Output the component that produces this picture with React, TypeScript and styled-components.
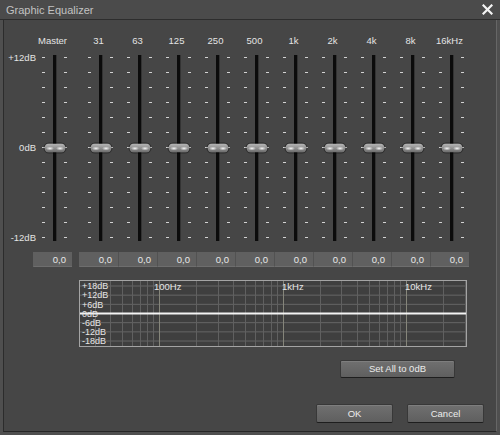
import styled, { createGlobalStyle } from 'styled-components';

const GlobalStyle = createGlobalStyle`
  html,
  body {
    margin: 0;
    width: 500px;
    height: 435px;
    overflow: hidden;
    background: #4f4f4f;
    font-family: 'Liberation Sans', Arial, sans-serif;
  }
`;

const bands = ['31', '63', '125', '250', '500', '1k', '2k', '4k', '8k', '16kHz'];
const tickRows = Array.from({ length: 13 }, (_, i) => i);
const scaleLabels: Record<number, string> = { 0: '+12dB', 6: '0dB', 12: '-12dB' };

const Window = styled.div`
  display: flex;
  flex-direction: column;
  height: 435px;
`;

const TitleBar = styled.div`
  height: 19px;
  display: flex;
  align-items: center;
  justify-content: space-between;
  padding: 0 7px 0 6px;
  background: #4b4b4b;
  border-bottom: 1px solid #2d2d2d;
`;

const TitleText = styled.span`
  font-size: 11px;
  color: #c2c2c2;
`;

const Body = styled.div`
  height: 412px;
  margin: 0 3px;
  padding-top: 15px;
  box-sizing: border-box;
  display: flex;
  flex-direction: column;
  background: #464646;
  border-left: 1px solid #2c2c2c;
  border-right: 1px solid #666;
  border-bottom: 1px solid #262626;
`;

const BandGrid = styled.div<{ $top?: number }>`
  display: grid;
  grid-template-columns: 29px 39px 7px repeat(10, 39px);
  margin-top: ${(p) => p.$top ?? 0}px;
`;

const HeaderLabel = styled.span`
  height: 12px;
  line-height: 12px;
  font-size: 9.5px;
  color: #e4e4e4;
  text-align: center;
`;

const ScaleColumn = styled.div`
  display: flex;
  flex-direction: column;
  margin-right: -3px;
`;

const ScaleRow = styled.div`
  height: 15px;
  display: flex;
  align-items: center;
  justify-content: flex-end;
  font-size: 9.5px;
  color: #e4e4e4;
`;

const SliderCell = styled.div`
  height: 195px;
  display: flex;
  justify-content: center;
  gap: 8px;
  padding-left: 4px;
`;

const TickColumn = styled.div`
  width: 3px;
  display: flex;
  flex-direction: column;
`;

const TickRow = styled.div`
  height: 15px;
  display: flex;
  align-items: center;
`;

const Tick = styled.span`
  width: 3px;
  height: 1px;
  background: #d2d2d2;
`;

const Track = styled.div`
  position: relative;
  width: 3px;
  margin: 4.5px 0;
  background: #0b0b0b;
  box-shadow: 1px 0 0 #333;
`;

const Knob = styled.div`
  position: absolute;
  left: 50%;
  top: 50%;
  width: 21px;
  height: 9px;
  transform: translate(-50%, -50%);
  border-radius: 4.5px;
  background: radial-gradient(ellipse 4px 2px at 26% 55%, #f4f4f4, transparent),
    radial-gradient(ellipse 4px 2px at 74% 55%, #f4f4f4, transparent),
    linear-gradient(#b8b8b8, #8e8e8e 55%, #6a6a6a);
  box-shadow: 0 0 0 1px rgba(0, 0, 0, 0.35);
`;

const ValueBox = styled.div<{ $first?: boolean }>`
  height: 15px;
  line-height: 15px;
  box-sizing: border-box;
  padding-right: 6px;
  text-align: right;
  font-size: 9.5px;
  color: #e8e8e8;
  background: #606060;
  border-left: 1px solid ${(p) => (p.$first ? '#606060' : '#525252')};
  border-bottom: 1px solid #6e6e6e;
`;

const GraphFrame = styled.div`
  width: 388px;
  height: 67px;
  margin: 13px 0 0 75px;
  box-sizing: border-box;
  border: 1px solid #a4a4a4;
  background: #3f3f3f;

  svg {
    display: block;
  }
`;

const ButtonRow = styled.div<{ $top: number; $right: number }>`
  display: flex;
  justify-content: flex-end;
  gap: 14px;
  margin-top: ${(p) => p.$top}px;
  padding-right: ${(p) => p.$right}px;
`;

const Button = styled.button<{ $w: number; $h: number }>`
  width: ${(p) => p.$w}px;
  height: ${(p) => p.$h}px;
  padding: 0;
  font-family: 'Liberation Sans', Arial, sans-serif;
  font-size: 9.5px;
  color: #ececec;
  background: linear-gradient(#707070, #5f5f5f);
  border: 1px solid #383838;
  border-bottom-color: #1e1e1e;
  border-radius: 2px;
  box-shadow: inset 0 1px 0 #7e7e7e;
`;

const Slider = () => (
  <SliderCell>
    <TickColumn>
      {tickRows.map((i) => (
        <TickRow key={i}>
          <Tick />
        </TickRow>
      ))}
    </TickColumn>
    <Track>
      <Knob />
    </Track>
    <TickColumn>
      {tickRows.map((i) => (
        <TickRow key={i}>
          <Tick />
        </TickRow>
      ))}
    </TickColumn>
  </SliderCell>
);

const freqs = [
  30, 40, 50, 60, 70, 80, 90, 100, 200, 300, 400, 500, 600, 700, 800, 900, 1000, 2000,
  3000, 4000, 5000, 6000, 7000, 8000, 9000, 10000, 20000, 30000,
];
const freqX = (f: number) => 202.5 + 123.4 * Math.log10(f / 1000);
const gainRows = ['+18dB', '+12dB', '+6dB', '0dB', '-6dB', '-12dB', '-18dB'];
const gainY = (i: number) => 5 + i * 9.17;
const graphFont = "'Liberation Sans', Arial, sans-serif";

// frequency response: log grid, flat 0dB curve
const ResponseGraph = () => (
  <GraphFrame>
    <svg width="386" height="65" viewBox="0 0 386 65">
      {gainRows.map((_, i) => (
        <line key={i} x1="0" x2="386" y1={gainY(i)} y2={gainY(i)} stroke="#666" strokeWidth="1" />
      ))}
      {freqs.map((f) => {
        const x = Math.round(freqX(f)) + 0.5;
        const decade = f === 100 || f === 1000 || f === 10000;
        return (
          <line key={f} x1={x} x2={x} y1="0" y2="65" stroke={decade ? '#85857a' : '#606060'} strokeWidth="1" />
        );
      })}
      <line x1="0" x2="386" y1={gainY(3)} y2={gainY(3)} stroke="#f4f4f4" strokeWidth="2" />
      {gainRows.map((label, i) => (
        <text key={label} x="2" y={gainY(i) + 3.3} fontSize="9" fill="#e6e6e6" fontFamily={graphFont}>
          {label}
        </text>
      ))}
      {[
        ['100Hz', 74],
        ['1kHz', 202],
        ['10kHz', 325],
      ].map(([label, x]) => (
        <text key={label} x={x} y={gainY(0) + 3.5} fontSize="9.5" fill="#e6e6e6" fontFamily={graphFont}>
          {label}
        </text>
      ))}
    </svg>
  </GraphFrame>
);

const App = () => {
  return (
    <Window>
      <GlobalStyle />
      <TitleBar>
        <TitleText>Graphic Equalizer</TitleText>
        <svg width="11" height="11" viewBox="0 0 11 11">
          <path d="M1.5 1.5 L9.5 9.5 M9.5 1.5 L1.5 9.5" stroke="#f4f4f4" strokeWidth="2.2" strokeLinecap="square" />
        </svg>
      </TitleBar>

      <Body>
        <BandGrid>
          <span />
          <HeaderLabel>Master</HeaderLabel>
          <span />
          {bands.map((b) => (
            <HeaderLabel key={b}>{b}</HeaderLabel>
          ))}
        </BandGrid>

        <BandGrid $top={3}>
          <ScaleColumn>
            {tickRows.map((i) => (
              <ScaleRow key={i}>{scaleLabels[i] ?? ''}</ScaleRow>
            ))}
          </ScaleColumn>
          <Slider />
          <span />
          {bands.map((b) => (
            <Slider key={b} />
          ))}
        </BandGrid>

        <BandGrid $top={6.5}>
          <span />
          <ValueBox $first>0,0</ValueBox>
          <span />
          {bands.map((b, i) => (
            <ValueBox key={b} $first={i === 0}>
              0,0
            </ValueBox>
          ))}
        </BandGrid>

        <ResponseGraph />

        <ButtonRow $top={13} $right={41}>
          <Button $w={115} $h={18}>Set All to 0dB</Button>
        </ButtonRow>

        <ButtonRow $top={26} $right={12}>
          <Button $w={77} $h={19}>OK</Button>
          <Button $w={77} $h={19}>Cancel</Button>
        </ButtonRow>
      </Body>
    </Window>
  );
};

export default App;
